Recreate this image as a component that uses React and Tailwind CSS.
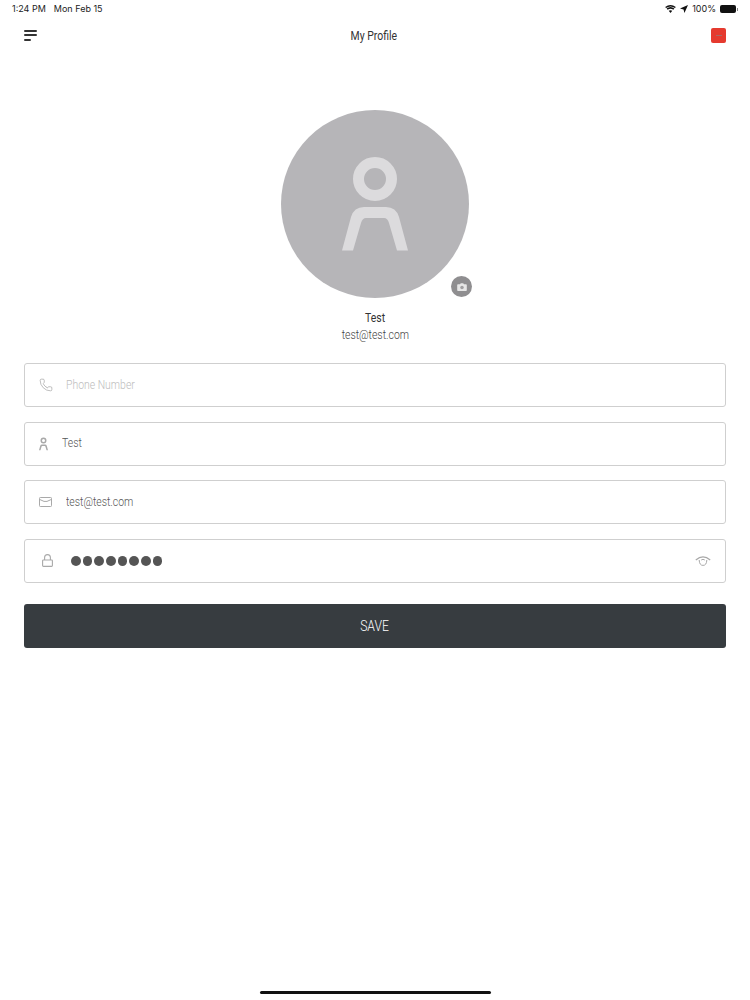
import { Phone } from 'lucide-react';

const PersonIcon = ({ className }) => (
    <svg viewBox="0 0 66 94" className={className} fill="currentColor">
        <circle cx="33" cy="22" r="16.5" fill="none" stroke="currentColor" strokeWidth="11" />
        <path d="M0 93.5 L9 60 Q12 50 22 50 L44 50 Q54 50 57 60 L66 93.5 L55 93.5 L47 66 Q45.5 61 42 61 L24 61 Q20.5 61 19 66 L11 93.5 Z" />
    </svg>
);

const CameraIcon = () => (
    <svg viewBox="0 0 12 10" className="w-[10px] h-[8px]">
        <path d="M1 1.5 H3.5 L4.5 0.3 H7.5 L8.5 1.5 H11 Q12 1.5 12 2.5 V9 Q12 10 11 10 H1 Q0 10 0 9 V2.5 Q0 1.5 1 1.5 Z" fill="#e6e6e6" />
        <circle cx="6" cy="5.6" r="2.2" fill="#a09fa1" />
    </svg>
);

const MailIcon = () => (
    <svg viewBox="0 0 13 10" className="w-[13px] h-[10px]" fill="none" stroke="currentColor" strokeWidth="1">
        <rect x="0.5" y="0.5" width="12" height="9" rx="0.8" />
        <path d="M1 2.6 L5 4.4 H8 L12 2.6" />
    </svg>
);

const LockIcon = () => (
    <svg viewBox="0 0 11 13" className="w-[11px] h-[13px]" fill="none" stroke="currentColor" strokeWidth="1.1">
        <rect x="0.6" y="6" width="9.8" height="6.4" rx="0.8" />
        <path d="M2.6 6 V3.6 Q2.6 0.6 5.5 0.6 Q8.4 0.6 8.4 3.6 V6" />
    </svg>
);

const EyeIcon = () => (
    <svg viewBox="0 0 16 11" className="w-[16px] h-[11px]" fill="none" stroke="currentColor">
        <path d="M0.8 5 Q8 -1.4 15.2 5" strokeWidth="1.2" />
        <path d="M4.2 5 Q4.4 10.4 8 10.4 Q11.6 10.4 11.8 5" strokeWidth="1" />
        <path d="M6.2 5 Q8 3.6 9.8 5" strokeWidth="1" />
    </svg>
);

const Field = ({ icon, gap, children, right }) => (
    <div className="h-11 rounded-[3px] border border-[#cfcfcf] bg-white flex items-center">
        <div className="w-[41px] shrink-0 flex justify-center text-[#a9a9a9]">{icon}</div>
        <div className={gap}>{children}</div>
        {right && <div className="ml-auto mr-[14px] text-[#a9a9a9]">{right}</div>}
    </div>
);

const FieldText = ({ className, children }) => (
    <span className={`block origin-left scale-x-[0.835] text-[12.5px] font-light whitespace-nowrap ${className}`}>
        {children}
    </span>
);

const App = () => {
    return (
        <div className="w-[750px] h-[1000px] bg-white flex flex-col font-['Roboto',sans-serif] overflow-hidden">
            <div className="h-[18px] px-3 flex items-center justify-between font-['Inter',sans-serif] text-[9px] text-[#222222]">
                <div className="flex gap-[8px]">
                    <span>1:24 PM</span>
                    <span>Mon Feb 15</span>
                </div>
                <div className="flex items-center gap-[4px]">
                    <svg viewBox="0 0 12 9" className="w-[11px] h-[8px]" fill="#111111">
                        <path d="M6 9 L4 6.6 Q6 5.2 8 6.6 Z" />
                        <path d="M2.8 5.4 L1.6 4 Q6 0.6 10.4 4 L9.2 5.4 Q6 3 2.8 5.4 Z" />
                        <path d="M1 3.3 L0 2.2 Q6 -2 12 2.2 L11 3.3 Q6 -0.2 1 3.3 Z" />
                    </svg>
                    <svg viewBox="0 0 9 9" className="w-[8px] h-[8px]" fill="#111111">
                        <path d="M9 0 L5 9 L4 5 L0 4 Z" />
                    </svg>
                    <span>100%</span>
                    <div className="flex items-center gap-px">
                        <div className="w-[16px] h-[8px] rounded-[2px] bg-[#111111]" />
                        <div className="w-px h-[3px] bg-[#888888]" />
                    </div>
                </div>
            </div>

            <div className="h-[34px] pl-6 pr-6 flex items-center justify-between">
                <div className="flex flex-col gap-[2.5px]">
                    <div className="w-[13px] h-[2px] bg-[#333333] rounded-full" />
                    <div className="w-[13px] h-[2px] bg-[#333333] rounded-full" />
                    <div className="w-[7px] h-[2px] bg-[#333333] rounded-full" />
                </div>
                <div className="pt-[2px] scale-x-[0.835] text-[12.5px] text-[#333333] whitespace-nowrap">My Profile</div>
                <div className="w-[15px] h-[15px] rounded-[2px] bg-[#e53a2f] flex items-center justify-center">
                    <div className="w-[6px] h-px bg-[#a86a66]" />
                </div>
            </div>

            <div className="flex flex-col items-center mt-[58px]">
                <div className="relative w-[188px] h-[188px] rounded-full bg-[#b6b5b8] flex items-center justify-center text-[#dcdbdd]">
                    <PersonIcon className="w-[66px] h-[94px]" />
                    <div className="absolute left-[170px] top-[166px] w-[21px] h-[21px] rounded-full bg-[#8f8e90] flex items-center justify-center">
                        <CameraIcon />
                    </div>
                </div>
                <div className="mt-[13px] scale-x-[0.835] text-[12.5px] leading-[14px] text-[#333333]">Test</div>
                <div className="mt-[2px] scale-x-[0.835] text-[12.5px] leading-[16px] font-light text-[#444444]">test@test.com</div>
            </div>

            <div className="mx-6 mt-[20px] flex flex-col gap-[14.67px]">
                <Field gap="ml-0" icon={<Phone className="w-[14px] h-[14px]" strokeWidth={1.3} />}>
                    <FieldText className="text-[#bdbdbd]">Phone Number</FieldText>
                </Field>
                <Field gap="-ml-[4px]" icon={<PersonIcon className="w-[9px] h-[14px] -ml-[4px]" />}>
                    <FieldText className="text-[#555555]">Test</FieldText>
                </Field>
                <Field gap="ml-0" icon={<MailIcon />}>
                    <FieldText className="text-[#555555]">test@test.com</FieldText>
                </Field>
                <Field
                    gap="ml-[5px]"
                    icon={<div className="ml-[3px] flex"><LockIcon /></div>}
                    right={<EyeIcon />}
                >
                    <div className="flex gap-[2.2px]">
                        {[0, 1, 2, 3, 4, 5, 6, 7].map((i) => (
                            <div key={i} className="w-[9.5px] h-[9.5px] rounded-full bg-[#555555]" />
                        ))}
                    </div>
                </Field>
            </div>

            <button className="mx-6 mt-[21px] h-11 pt-px rounded-[3px] bg-[#373c40] text-[14px] font-light text-white">
                <span className="inline-block scale-x-[0.87]">SAVE</span>
            </button>

            <div className="mt-auto mb-[6px] mx-auto w-[231px] h-[3.5px] rounded-full bg-[#111111]" />
        </div>
    );
};

export default App;
